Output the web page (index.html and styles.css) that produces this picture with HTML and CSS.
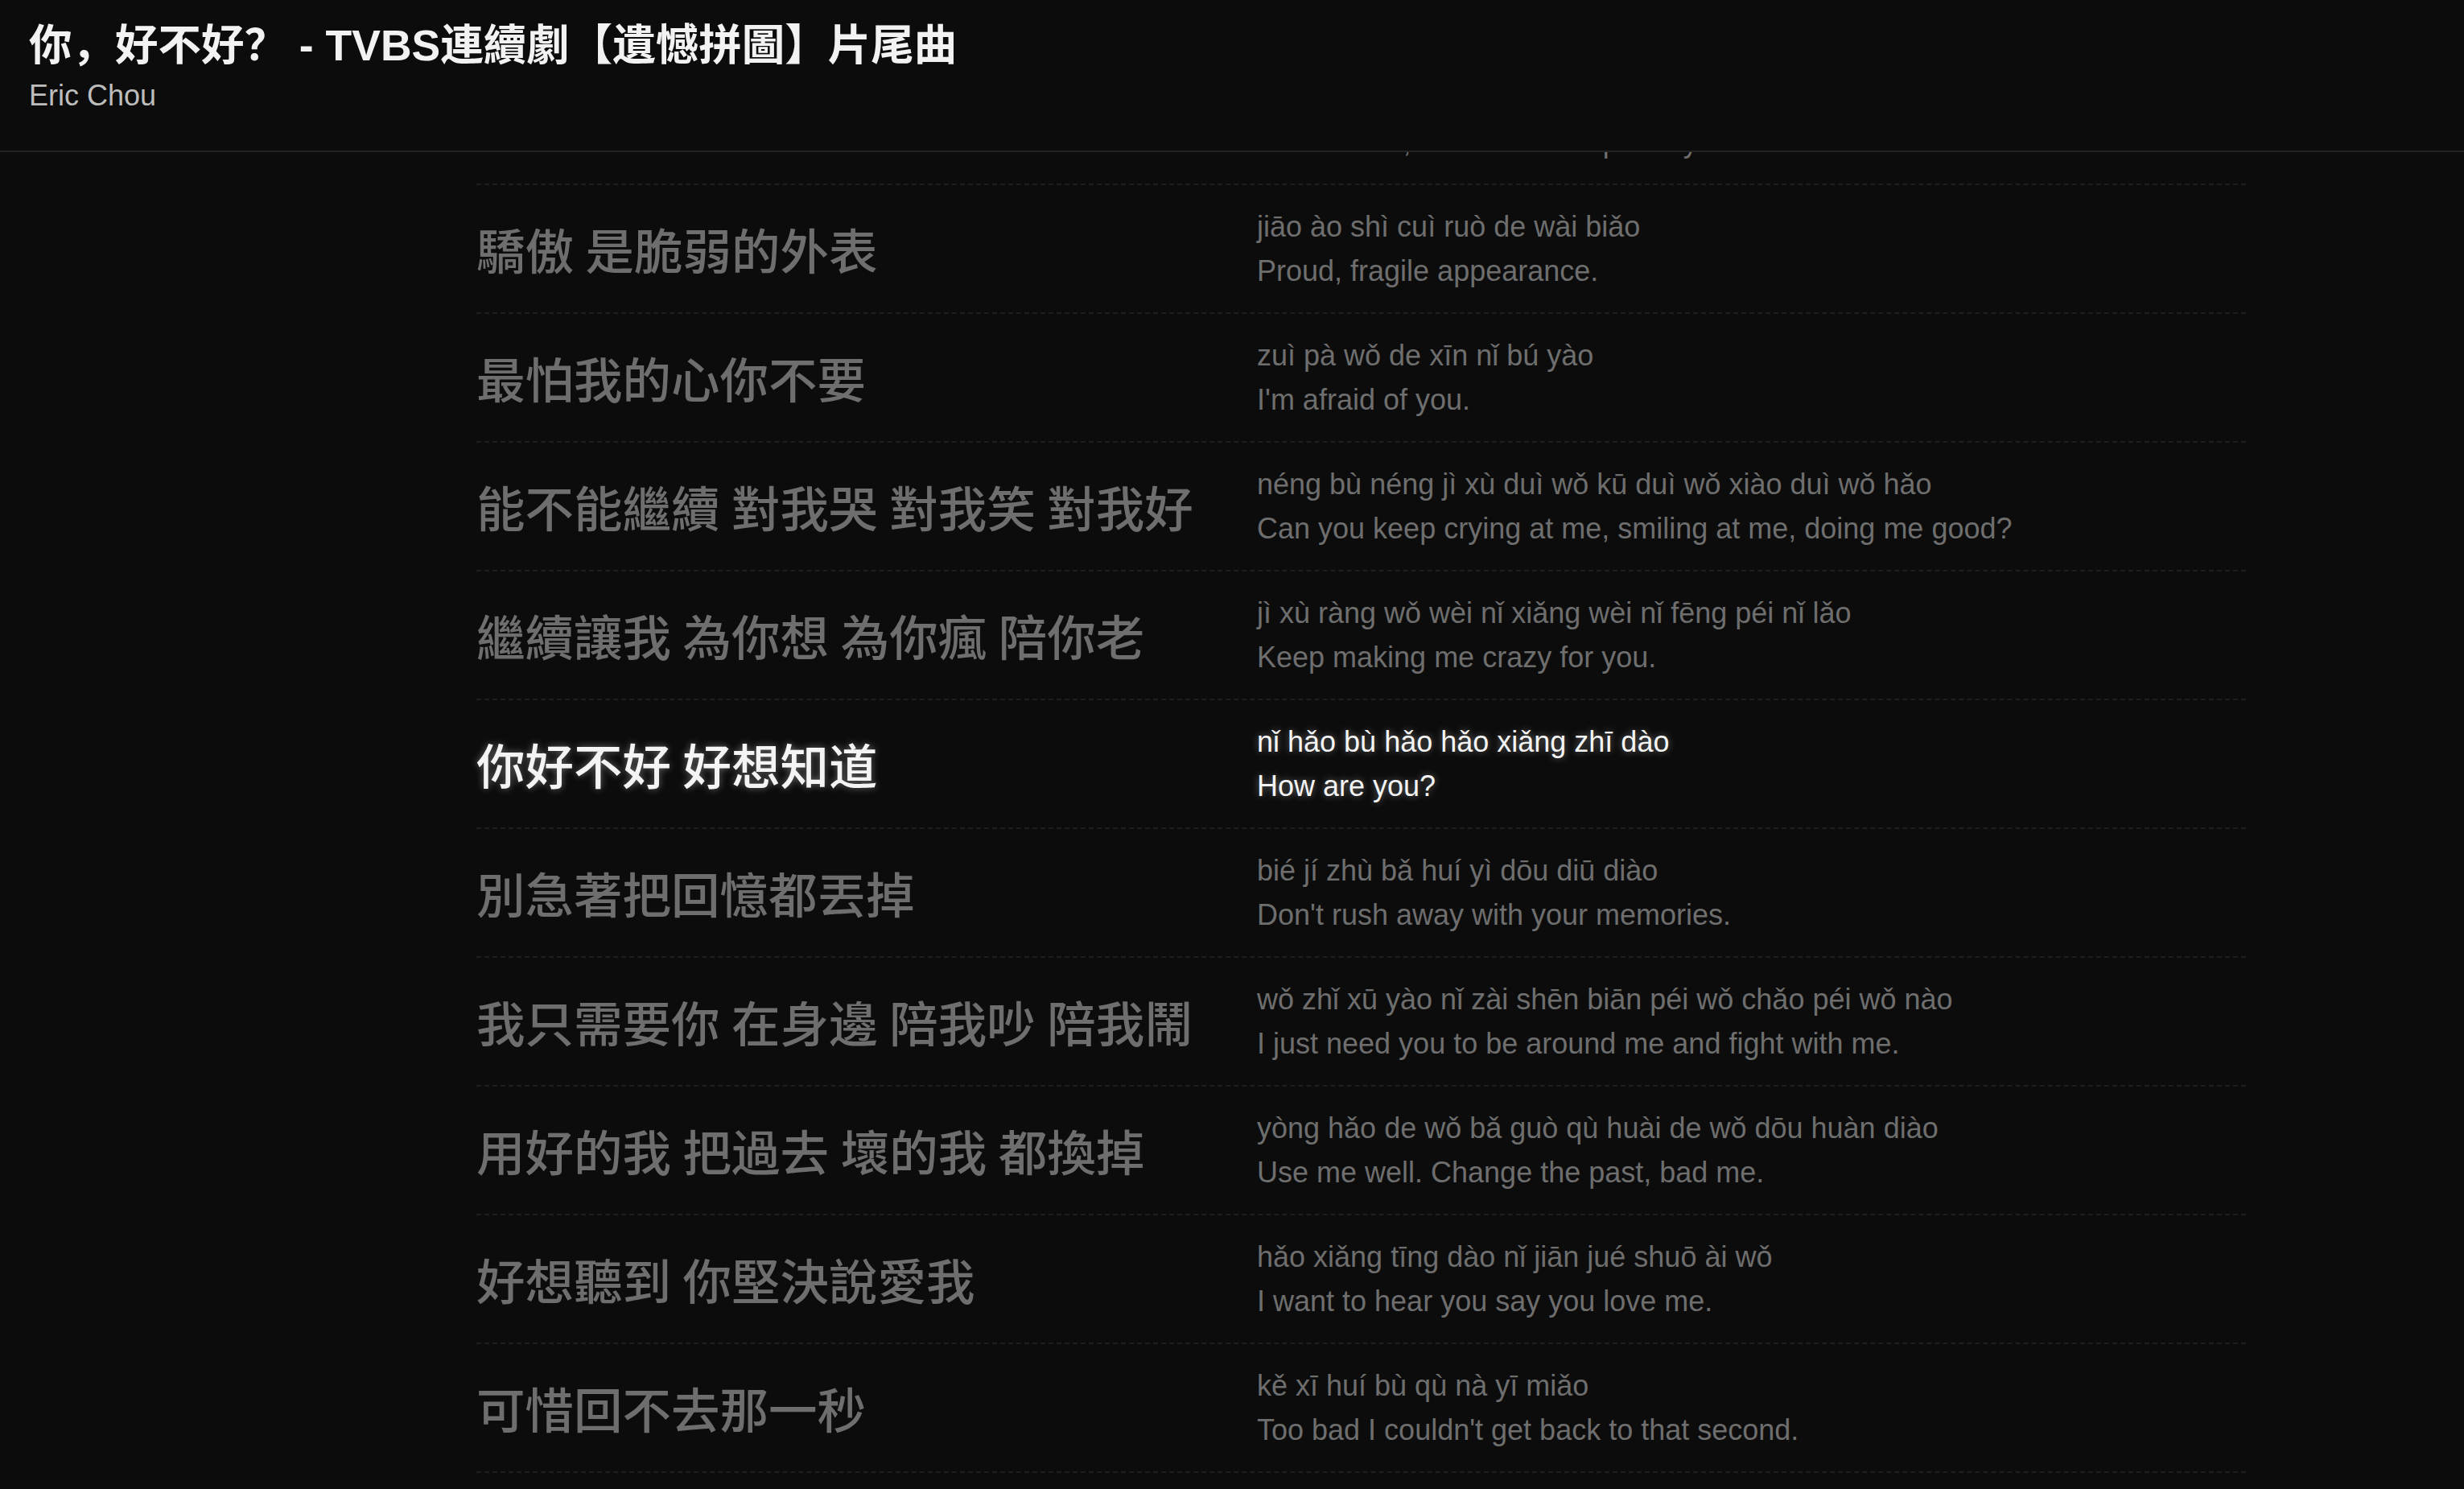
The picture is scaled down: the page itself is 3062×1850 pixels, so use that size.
FILE: index.html
```html
<!DOCTYPE html>
<html lang="en">
<head>
<meta charset="utf-8">
<title>你，好不好？ - Eric Chou</title>
<link rel="stylesheet" href="styles.css">
</head>
<body>
<div class="app">
  <header class="header">
    <h1 class="title">你，好不好？ - TVBS連續劇【遺憾拼圖】片尾曲</h1>
    <div class="artist">Eric Chou</div>
  </header>
  <main class="viewport">
    <ul class="lyrics">
      <li class="row">
        <div class="zh">我們都太驕傲</div>
        <div class="tr"><div class="py">wǒ men dōu tài jiāo ào</div><div class="en">We hold on, both of us too proudly.</div></div>
      </li>
      <li class="row">
        <div class="zh">驕傲 是脆弱的外表</div>
        <div class="tr"><div class="py">jiāo ào shì cuì ruò de wài biǎo</div><div class="en">Proud, fragile appearance.</div></div>
      </li>
      <li class="row">
        <div class="zh">最怕我的心你不要</div>
        <div class="tr"><div class="py">zuì pà wǒ de xīn nǐ bú yào</div><div class="en">I'm afraid of you.</div></div>
      </li>
      <li class="row">
        <div class="zh">能不能繼續 對我哭 對我笑 對我好</div>
        <div class="tr"><div class="py">néng bù néng jì xù duì wǒ kū duì wǒ xiào duì wǒ hǎo</div><div class="en">Can you keep crying at me, smiling at me, doing me good?</div></div>
      </li>
      <li class="row">
        <div class="zh">繼續讓我 為你想 為你瘋 陪你老</div>
        <div class="tr"><div class="py">jì xù ràng wǒ wèi nǐ xiǎng wèi nǐ fēng péi nǐ lǎo</div><div class="en">Keep making me crazy for you.</div></div>
      </li>
      <li class="row active">
        <div class="zh">你好不好 好想知道</div>
        <div class="tr"><div class="py">nǐ hǎo bù hǎo hǎo xiǎng zhī dào</div><div class="en">How are you?</div></div>
      </li>
      <li class="row">
        <div class="zh">別急著把回憶都丟掉</div>
        <div class="tr"><div class="py">bié jí zhù bǎ huí yì dōu diū diào</div><div class="en">Don't rush away with your memories.</div></div>
      </li>
      <li class="row">
        <div class="zh">我只需要你 在身邊 陪我吵 陪我鬧</div>
        <div class="tr"><div class="py">wǒ zhǐ xū yào nǐ zài shēn biān péi wǒ chǎo péi wǒ nào</div><div class="en">I just need you to be around me and fight with me.</div></div>
      </li>
      <li class="row">
        <div class="zh">用好的我 把過去 壞的我 都換掉</div>
        <div class="tr"><div class="py">yòng hǎo de wǒ bǎ guò qù huài de wǒ dōu huàn diào</div><div class="en">Use me well. Change the past, bad me.</div></div>
      </li>
      <li class="row">
        <div class="zh">好想聽到 你堅決說愛我</div>
        <div class="tr"><div class="py">hǎo xiǎng tīng dào nǐ jiān jué shuō ài wǒ</div><div class="en">I want to hear you say you love me.</div></div>
      </li>
      <li class="row">
        <div class="zh">可惜回不去那一秒</div>
        <div class="tr"><div class="py">kě xī huí bù qù nà yī miǎo</div><div class="en">Too bad I couldn't get back to that second.</div></div>
      </li>
      <li class="row">
        <div class="zh">你好不好 好想知道</div>
        <div class="tr"><div class="py">nǐ hǎo bù hǎo hǎo xiǎng zhī dào</div><div class="en">How are you?</div></div>
      </li>
    </ul>
  </main>
</div>
</body>
</html>
```
FILE: styles.css
```css
html, body {
  margin: 0;
  padding: 0;
  height: 100%;
  background: #0c0c0c;
  overflow: hidden;
}

body {
  font-family: "Liberation Sans", "Noto Sans CJK SC", sans-serif;
  color: #6e6e6e;
}

.app {
  display: flex;
  flex-direction: column;
  height: 100vh;
}

.header {
  flex: 0 0 auto;
  height: 163px;
  padding: 24px 36px 0;
  border-bottom: 2px solid #222222;
  background: #0c0c0c;
}

.title {
  margin: 0;
  font-family: "Liberation Sans", "Noto Sans CJK SC", sans-serif;
  font-size: 53.5px;
  line-height: 65px;
  font-weight: 700;
  color: #f2f2f2;
  white-space: nowrap;
}

.artist {
  margin-top: 8px;
  font-size: 36px;
  line-height: 43px;
  color: #bdbdbd;
}

.viewport {
  flex: 1 1 auto;
  overflow: hidden;
}

.lyrics {
  list-style: none;
  margin: -119px 0 0 592px;
  padding: 0;
  width: 2199px;
}

.row {
  display: grid;
  grid-template-columns: 970px 1fr;
  align-items: center;
  height: 158px;
  border-bottom: 2px dashed #1e1e1e;
}

.zh {
  font-family: "Noto Sans CJK SC", sans-serif;
  font-size: 60.5px;
  line-height: 72px;
  font-weight: 500;
  word-spacing: 1px;
  color: #6e6e6e;
  white-space: nowrap;
}

.tr {
  font-size: 36px;
  line-height: 55px;
  color: #6e6e6e;
}

.py, .en {
  white-space: nowrap;
}

.active .zh,
.active .tr {
  color: #f4f4f4;
  text-shadow: 0 0 10px rgba(255, 255, 255, 0.4);
}

.active .tr {
  font-weight: 500;
}
```
